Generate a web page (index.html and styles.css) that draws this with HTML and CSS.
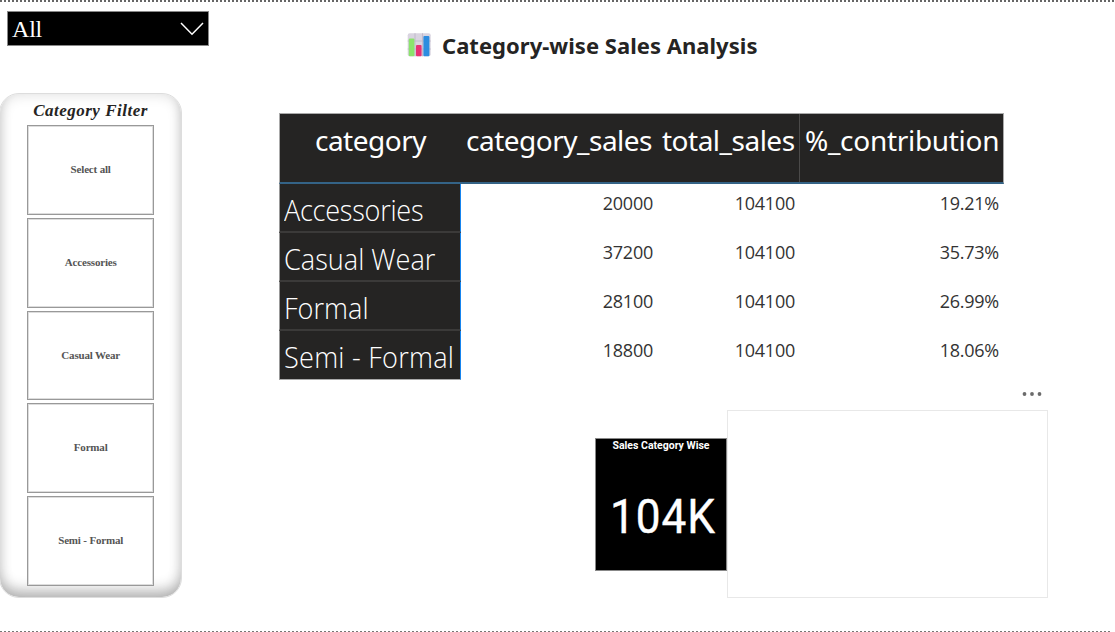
FILE: index.html
```html
<!DOCTYPE html>
<html lang="en">
<head>
<meta charset="utf-8">
<title>Category-wise Sales Analysis</title>
<link rel="stylesheet" href="styles.css">
</head>
<body>
<div class="page">
  <aside class="side">
    <div class="dropdown">
      <span class="dropdown-value">All</span>
      <svg class="chevron" width="24" height="14" viewBox="0 0 24 14"><path d="M1 1 L12 12.2 L23 1" fill="none" stroke="#fff" stroke-width="1.5"/></svg>
    </div>
    <section class="filter">
      <h2 class="filter-title">Category Filter</h2>
      <div class="tiles">
        <div class="tile">Select all</div>
        <div class="tile">Accessories</div>
        <div class="tile">Casual Wear</div>
        <div class="tile">Formal</div>
        <div class="tile">Semi - Formal</div>
      </div>
    </section>
  </aside>
  <main class="main">
    <header class="heading">
      <svg class="chart-icon" width="24" height="24" viewBox="0 0 24 24">
        <rect x="0.7" y="0.2" width="23" height="23" rx="2" fill="#d9d4e0"/>
        <path d="M8 .2V23.2M15.5 .2V23.2M.7 8H23.7M.7 16H23.7" stroke="#bbb4c7" stroke-width=".8"/>
        <rect x="1.8" y="5.5" width="5.6" height="17.7" rx="1" fill="#8be36c"/>
        <rect x="9" y="12" width="5.6" height="11.2" rx="1" fill="#e83174"/>
        <rect x="16.4" y="3" width="6" height="20.2" rx="1" fill="#2d8de0"/>
      </svg>
      <h1 class="title">Category-wise Sales Analysis</h1>
    </header>
    <div class="matrix">
      <div class="row head">
        <div class="c1">category</div>
        <div class="c2">category_sales</div>
        <div class="c3">total_sales</div>
        <div class="c4">%_contribution</div>
      </div>
      <div class="row"><div class="c1"><span class="label tight">Accessories</span></div><div class="c2">20000</div><div class="c3">104100</div><div class="c4">19.21%</div></div>
      <div class="row"><div class="c1"><span class="label">Casual Wear</span></div><div class="c2">37200</div><div class="c3">104100</div><div class="c4">35.73%</div></div>
      <div class="row"><div class="c1"><span class="label">Formal</span></div><div class="c2">28100</div><div class="c3">104100</div><div class="c4">26.99%</div></div>
      <div class="row"><div class="c1"><span class="label wide">Semi - Formal</span></div><div class="c2">18800</div><div class="c3">104100</div><div class="c4">18.06%</div></div>
    </div>
    <div class="bottom">
      <div class="card">
        <div class="card-title">Sales Category Wise</div>
        <div class="card-value">104K</div>
      </div>
      <div class="visual">
        <svg class="more" width="20" height="6" viewBox="0 0 20 6" fill="#6b6b6b"><circle cx="2.5" cy="3" r="1.9"/><circle cx="10" cy="3" r="1.9"/><circle cx="17.5" cy="3" r="1.9"/></svg>
        <div class="blank"></div>
      </div>
    </div>
  </main>
</div>
</body>
</html>
```
FILE: styles.css
```css
* { box-sizing: border-box; }
body { margin: 0; background: #fff; color: #252423; font-family: "Noto Sans", "Open Sans", sans-serif; }
.page {
  width: 1115px; height: 632px; overflow: hidden; display: flex;
  background:
    repeating-linear-gradient(90deg, #666 0 2px, #fff 2px 4px) 0 0 / 1115px 2px no-repeat,
    repeating-linear-gradient(90deg, #777 0 2px, #fff 2px 4px) 0 631px / 1112px 1px no-repeat,
    #fff;
}
span { display: inline-block; white-space: nowrap; }
.side { width: 279px; padding-top: 11px; flex: none; }
.dropdown {
  margin-left: 7px; width: 202px; height: 35px; background: #000; border: 1px solid #888;
  display: flex; align-items: center; justify-content: space-between; padding: 0 4px;
}
.dropdown-value { color: #fff; font: 24px/32px "Liberation Serif", serif; letter-spacing: -.2px; }
.chevron { margin-top: 1px; }
.filter {
  margin: 47px 0 0 -1px; width: 183px; height: 505px; border-radius: 20px; border: 1px solid #ddd;
  box-shadow: inset 0 -10px 14px -3px rgba(0,0,0,.24), inset 0 0 14px rgba(0,0,0,.14);
  padding: 6px 27px 0;
}
.filter-title {
  margin: 0 -10px; height: 25.4px; text-align: center; white-space: nowrap;
  font: italic bold 17px/21px "Liberation Serif", serif; letter-spacing: .5px;
}
.tiles { display: flex; flex-direction: column; gap: 3px; }
.tile {
  width: 127.4px; height: 89.7px; border: 1px solid #999; box-shadow: inset 0 0 0 1px #ddd; background: #fff; color: #555;
  display: flex; align-items: center; justify-content: center; padding-bottom: 2px;
  font: bold 11px/14px "Liberation Serif", serif; letter-spacing: -.17px;
}
.main { flex: 1; min-width: 0; }
.heading { display: flex; align-items: center; gap: 11px; height: 32px; margin: 29px 0 0 128px; }
.title { margin: 0; font: bold 22px/32px "Noto Sans", sans-serif; white-space: nowrap; letter-spacing: .03px; }
.matrix { margin-top: 52px; width: 725px; }
.row { display: grid; grid-template-columns: 182px 196px 142px 205px; height: 49px; }
.row > div { padding: 5px 4px 0; text-align: right; font-size: 18px; line-height: 28px; font-family: "Open Sans", sans-serif; white-space: nowrap; letter-spacing: -.25px; color: #333; }
.row > .c4 { padding-right: 5px; }
.row > .c1 {
  background: #252423; color: #fff; text-align: left; font-weight: 300; font-size: 29px; line-height: 40px; letter-spacing: 0;
  padding: 6px 5px 0 4px; border-left: 1px solid #999; border-right: 1px solid #1684ee; border-bottom: 2px solid #3b3a39;
}
.label { transform: scaleX(.935); transform-origin: left; }
.tight { letter-spacing: -.3px; }
.wide { letter-spacing: .25px; }
.row:last-child > .c1 { border-bottom: 1px solid #aaa; }
.row.head { height: 71px; background: #252423; border: 1px solid #aaa; border-bottom: 2px solid #346386; grid-template-columns: 181px 196px 142px 204px; }
.row.head > div { color: #fff; font: 28px/40px "Noto Sans", sans-serif; border: 0; padding: 6px 5px 0; letter-spacing: -.5px; }
.row.head > .c1 { text-align: center; }
.row.head > .c4 { border-left: 1px solid #4b4a49; padding-right: 4px; letter-spacing: -.3px; }
.bottom { display: flex; margin: 9px 0 0 316px; }
.card { width: 132px; height: 133px; margin-top: 49px; background: #000; border: 1px solid #888; color: #fff; text-align: center; white-space: nowrap; }
.card-title { font: bold 10.5px/13px Roboto, sans-serif; }
.card-value { font: 400 48px/56px Roboto, sans-serif; margin-top: 37px; padding-left: 4px; letter-spacing: 1px; transform: scaleX(.92); -webkit-text-stroke: .4px #fff; }
.visual { width: 321px; display: flex; flex-direction: column; align-items: flex-end; }
.more { margin: 2px 6px 13px 0; }
.blank { width: 321px; height: 188px; border: 1px solid #e8e8e8; }
```
